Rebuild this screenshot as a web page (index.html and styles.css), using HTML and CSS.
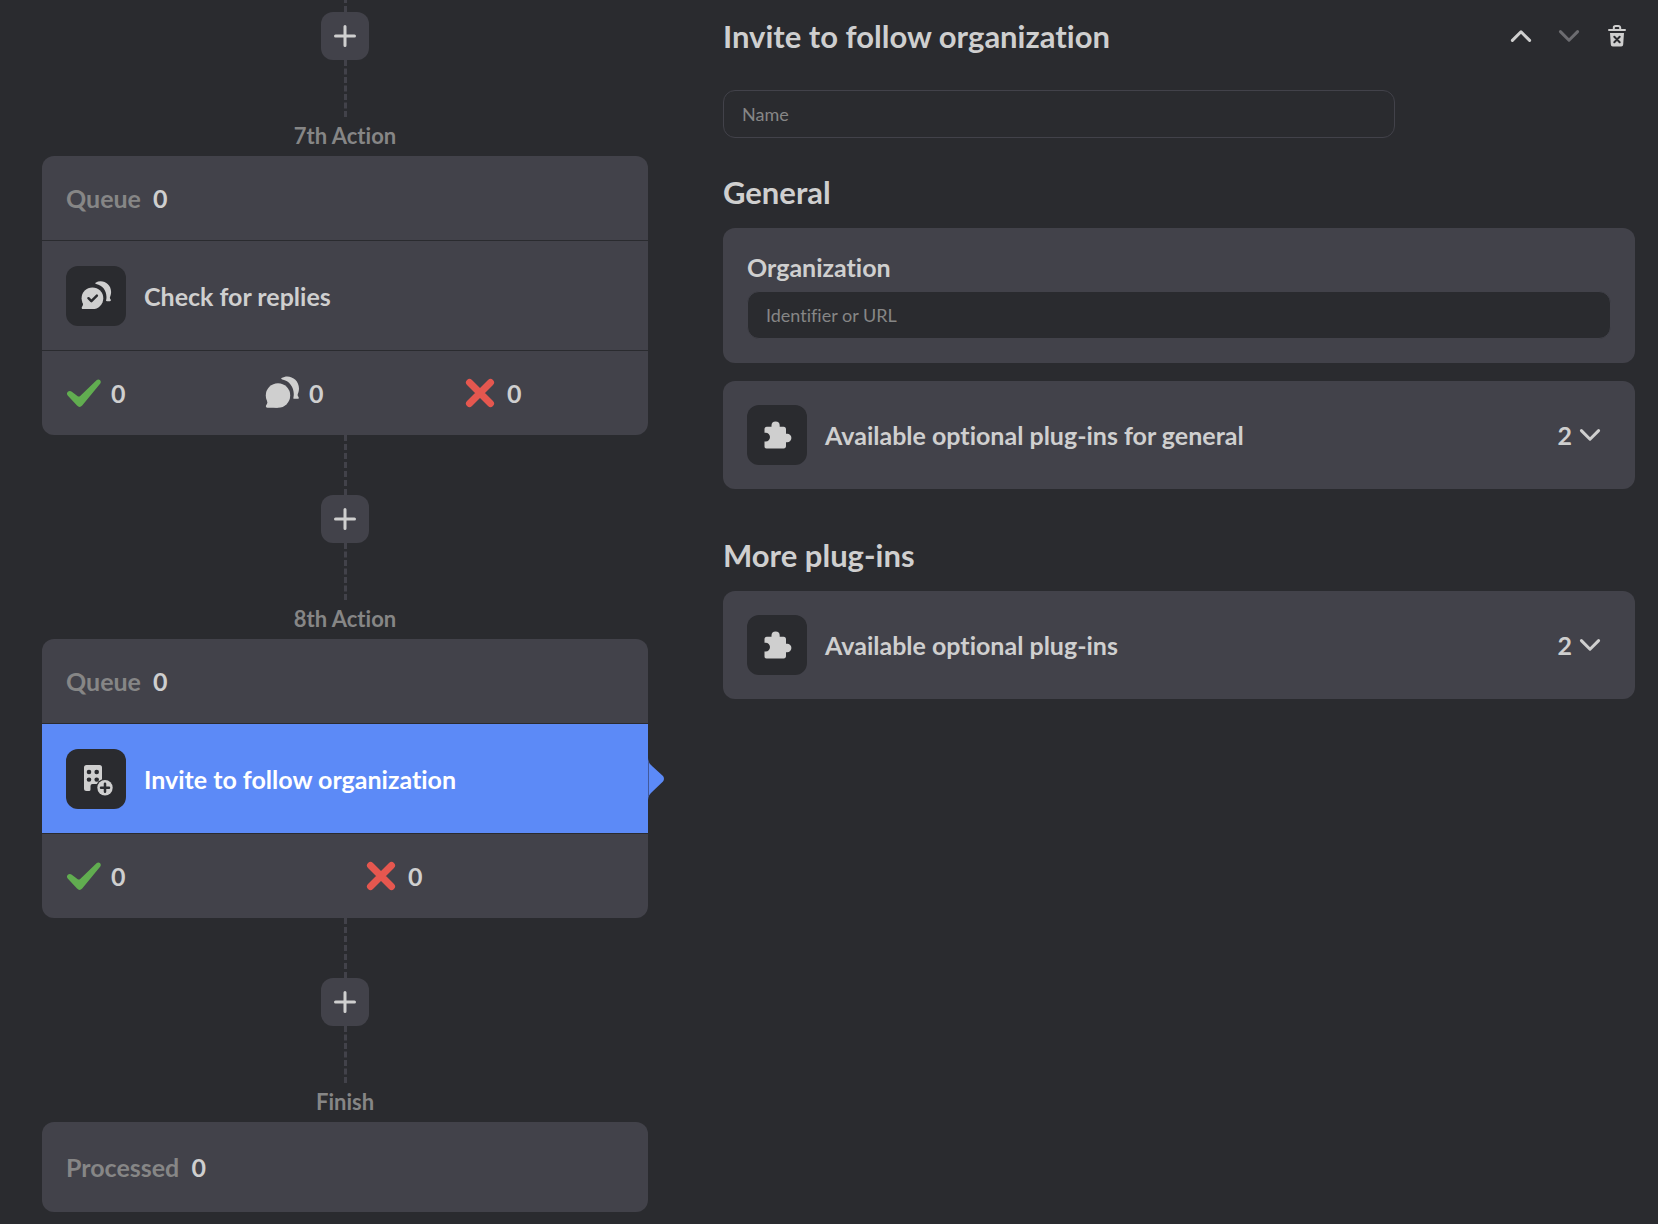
FILE: index.html
```html
<!DOCTYPE html>
<html lang="en">
<head>
    <meta charset="UTF-8">
    <meta name="viewport" content="width=device-width, initial-scale=1.0">
    <title>Campaign workflow</title>
    <link rel="stylesheet" href="styles.css">
</head>
<body>

<!-- shared icons -->
<svg class="sprite" aria-hidden="true">
    <symbol id="plus" viewBox="0 0 24 24">
        <path d="M12 2.500v19M2.500 12h19" fill="none" stroke="currentColor" stroke-width="3" stroke-linecap="round"/>
    </symbol>
    <symbol id="chevron" viewBox="0 0 24 24">
        <path d="M3.400 7.600l8.600 8.600 8.600-8.600" fill="none" stroke="currentColor" stroke-width="3" stroke-linecap="round" stroke-linejoin="round"/>
    </symbol>
    <symbol id="check" viewBox="0 0 36 36">
        <path d="M1.800 16.800c1.200-1.200 2.800-1.200 4 0l5.600 4.200c1 .8 1.800.8 2.800-.1L30.500 5.300c1.100-1 2.600-1 3.600 0 .9 1 .9 2.400 0 3.500L16.200 30.500c-1.700 1.900-3.500 1.900-5.200 0L1.700 20.600c-1-1.200-1-2.700.1-3.800z" fill="#61ad50"/>
    </symbol>
    <symbol id="cross" viewBox="0 0 36 36">
        <path d="M7.500 7.500l21 21M28.500 7.500l-21 21" fill="none" stroke="#e5574f" stroke-width="7" stroke-linecap="round"/>
    </symbol>
    <symbol id="replies" viewBox="0 0 36 36">
        <circle cx="14" cy="20.500" r="12.200" fill="currentColor"/>
        <path d="M3 25.500c.8 1.800.4 3-.7 4.600-.9 1.400-.4 2.600 1.200 2.600H14l-4-6z" fill="currentColor"/>
        <path d="M17.500 3C25-1.500 35 4 35 13.500c0 2.500-.8 4.500-1.300 6-.3 1 .2 1.700.8 2.500.6.9.3 1.800-.8 1.800h-3.300c-1 0-1.400-.7-.9-1.600C31 14 26.500 6 18.200 4.500c-1-.2-1.300-1-.7-1.500z" fill="currentColor"/>
    </symbol>
    <symbol id="puzzle" viewBox="0 0 32 32">
        <path d="M3.500 10.200c0-1.500.8-2.400 2.300-2.400h4.700V6.600a4.100 4.100 0 0 1 8.200 0v1.200h4c1.500 0 2.300.9 2.300 2.400v4.600h1.200a4.200 4.200 0 0 1 0 8.400H25v3.900c0 1.500-.8 2.300-2.300 2.300H5.500c-1.300 0-2-.8-2-2v-5h1.200a4.300 4.300 0 0 0 0-8.600H3.500z" fill="currentColor"/>
    </symbol>
</svg>

<main class="editor">
    <section class="workflow">
        <div class="line"></div>
        <button class="add" type="button" aria-label="Add action"><svg class="icon"><use href="#plus"/></svg></button>
        <div class="line short"></div>
        <h3 class="step">7th Action</h3>
        <article class="action">
            <div class="queue">Queue <span class="count">0</span></div>
            <button class="action-name" type="button">
                <span class="tile">
                    <svg class="tile-icon" viewBox="0 0 36 36">
                        <use href="#replies"/>
                        <path d="M9.500 20.500l3.300 3.300 6.200-6.200" fill="none" stroke="#2a2b2f" stroke-width="2.800" stroke-linecap="round" stroke-linejoin="round"/>
                    </svg>
                </span>
                Check for replies
            </button>
            <div class="stats">
                <div class="stat"><svg class="stat-icon"><use href="#check"/></svg>0</div>
                <div class="stat"><svg class="stat-icon"><use href="#replies"/></svg>0</div>
                <div class="stat"><svg class="stat-icon"><use href="#cross"/></svg>0</div>
            </div>
        </article>

        <div class="line"></div>
        <button class="add" type="button" aria-label="Add action"><svg class="icon"><use href="#plus"/></svg></button>
        <div class="line short"></div>
        <h3 class="step">8th Action</h3>
        <article class="action">
            <div class="queue">Queue <span class="count">0</span></div>
            <button class="action-name selected" type="button">
                <span class="tile">
                    <svg class="tile-icon building" viewBox="0 0 32 32">
                        <path d="M6.500 2H19.500a2.500 2.500 0 0 1 2.500 2.500V21H12.500a2 2 0 0 0-2 2v3.500a1.500 1.500 0 0 1-1.500 1.500H6.500a2.500 2.500 0 0 1-2.500-2.500V4.500A2.500 2.500 0 0 1 6.500 2z" fill="#cfcfcf"/>
                        <path d="M8.900 9h.2M16.600 9h.2M8.900 16.600h.2M16.600 16.600h.2" stroke="#2a2b2f" stroke-width="4.400" stroke-linecap="round"/>
                        <circle cx="25" cy="24.700" r="9" fill="#2a2b2f"/>
                        <circle cx="25" cy="24.700" r="7.700" fill="#cfcfcf"/>
                        <path d="M25 20.700v8M21 24.700h8" stroke="#2a2b2f" stroke-width="2.500" stroke-linecap="round"/>
                    </svg>
                </span>
                Invite to follow organization
                <svg class="pointer" viewBox="0 0 16 42">
                    <path d="M0 0c0 4 2 6 4 8l11 10c1.300 1.500 1.300 4 0 5.500L4 34c-2 2-4 4-4 8z" fill="#5c8af7"/>
                    <path d="M.5 3v36" stroke="#42599a"/>
                </svg>
            </button>
            <div class="stats">
                <div class="stat"><svg class="stat-icon"><use href="#check"/></svg>0</div>
                <div class="stat"><svg class="stat-icon"><use href="#cross"/></svg>0</div>
            </div>
        </article>

        <div class="line"></div>
        <button class="add" type="button" aria-label="Add action"><svg class="icon"><use href="#plus"/></svg></button>
        <div class="line short"></div>
        <h3 class="step">Finish</h3>
        <article class="action">
            <div class="queue processed">Processed <span class="count">0</span></div>
        </article>
    </section>

    <section class="settings">
        <header class="header">
            <h1 class="title">Invite to follow organization</h1>
            <div class="tools">
                <button class="tool" type="button" aria-label="Move up"><svg class="icon up"><use href="#chevron"/></svg></button>
                <button class="tool" type="button" aria-label="Move down" disabled><svg class="icon"><use href="#chevron"/></svg></button>
                <button class="tool" type="button" aria-label="Delete">
                    <svg class="icon" viewBox="0 0 24 24">
                        <path d="M4 6h16M8.800 5.500V3.800a1.800 1.800 0 0 1 1.800-1.800h2.800a1.800 1.800 0 0 1 1.800 1.800v1.700" fill="none" stroke="currentColor" stroke-width="2" stroke-linecap="round"/>
                        <path d="M5 9h14l-.8 11.500a2 2 0 0 1-2 1.900H7.800a2 2 0 0 1-2-1.900z" fill="currentColor"/>
                        <path d="M9.300 12.800l5.400 5.400M14.700 12.800l-5.400 5.400" stroke="#2a2b2f" stroke-width="2" stroke-linecap="round"/>
                    </svg>
                </button>
            </div>
        </header>

        <input class="input name" type="text" placeholder="Name" aria-label="Name">

        <h2 class="title">General</h2>
        <div class="card">
            <label class="label" for="organization">Organization</label>
            <input class="input" id="organization" type="text" placeholder="Identifier or URL">
        </div>
        <button class="card plugins" type="button">
            <span class="tile"><svg class="tile-icon"><use href="#puzzle"/></svg></span>
            <span class="plugins-name">Available optional plug-ins for general</span>
            2
            <svg class="icon"><use href="#chevron"/></svg>
        </button>

        <h2 class="title more">More plug-ins</h2>
        <button class="card plugins" type="button">
            <span class="tile"><svg class="tile-icon"><use href="#puzzle"/></svg></span>
            <span class="plugins-name">Available optional plug-ins</span>
            2
            <svg class="icon"><use href="#chevron"/></svg>
        </button>
    </section>
</main>

</body>
</html>
```

FILE: styles.css
```css
* {
    box-sizing: border-box;
}

body {
    margin: 0;
    background-color: #2a2b2f;
    color: #cfcfcf;
    font-family: 'Lato', sans-serif;
    font-size: 25px;
    font-weight: 700;
    font-variant-ligatures: none;
    line-height: 36px;
}

button,
input {
    font: inherit;
    font-variant-ligatures: none;
    color: inherit;
}

button {
    border: none;
    cursor: pointer;
}

.sprite {
    display: none;
}

.editor {
    display: grid;
    grid-template-columns: 101fr 152fr;
    gap: 75px;
    height: 100vh;
    padding: 0 23px 0 42px;
    overflow: hidden;
}

/* Workflow, scrolled to its end */
.workflow {
    display: flex;
    flex-direction: column;
    align-items: center;
    justify-content: flex-end;
    min-height: 0;
    padding-bottom: 12px;
}

.workflow > * {
    flex-shrink: 0;
}

.line {
    width: 0;
    height: 60px;
    border-left: 3px dashed #42424a;
}

.line.short {
    height: 57px;
}

.add {
    display: flex;
    align-items: center;
    justify-content: center;
    width: 48px;
    height: 48px;
    padding: 0;
    border-radius: 12px;
    background-color: #42424a;
}

.icon {
    display: block;
    width: 24px;
    height: 24px;
}

.step {
    margin: 0;
    padding: 1px 0 2px;
    color: #868686;
    font-size: 22px;
}

.action {
    width: 100%;
    border-radius: 12px;
    background-color: #42424a;
}

.queue {
    padding: 24px;
    color: #868686;
}

.queue.processed {
    padding: 27px 24px;
}

.count {
    margin-left: 6px;
    color: #cfcfcf;
}

.action-name {
    position: relative;
    display: flex;
    align-items: center;
    gap: 18px;
    width: 100%;
    height: 111px;
    padding: 0 24px;
    border: solid #2a2b2f;
    border-width: 1px 0;
    background-color: transparent;
    text-align: left;
}

.action-name.selected {
    background-color: #5c8af7;
    color: #fff;
}

.pointer {
    position: absolute;
    top: 50%;
    left: 100%;
    width: 16px;
    height: 42px;
    margin-top: -21px;
}

.tile {
    display: flex;
    align-items: center;
    justify-content: center;
    width: 60px;
    height: 60px;
    border-radius: 12px;
    background-color: #2a2b2f;
    color: #cfcfcf;
}

.tile-icon {
    width: 32px;
    height: 32px;
}

.building {
    overflow: visible;
}

.stats {
    display: flex;
    gap: 36px;
    padding: 24px;
}

.stat {
    display: flex;
    flex: 1;
    align-items: center;
    gap: 9px;
}

.stat-icon {
    width: 36px;
    height: 36px;
}

/* Settings of the selected action */
.settings {
    min-width: 0;
}

.header {
    display: flex;
    align-items: center;
    justify-content: space-between;
    margin: 12px -6px 30px 0;
}

.title {
    margin: 0;
    font-size: 31px;
    font-weight: 700;
}

h2.title {
    margin: 36px 0 18px;
}

h2.more {
    margin-top: 48px;
}

.tools {
    display: flex;
}

.tool {
    display: flex;
    align-items: center;
    justify-content: center;
    width: 48px;
    height: 48px;
    padding: 0;
    background-color: transparent;
}

.tool:disabled {
    color: #6c6c70;
}

.up {
    transform: rotate(180deg);
}

.input {
    display: block;
    width: 100%;
    height: 48px;
    padding: 0 18px;
    border: 1px solid #42424a;
    border-radius: 12px;
    background-color: #2a2b2f;
    font-size: 18px;
    font-weight: 400;
}

.input.name {
    max-width: 672px;
}

.input::placeholder {
    color: #868686;
}

.card {
    width: 100%;
    margin-bottom: 18px;
    padding: 24px;
    border-radius: 12px;
    background-color: #42424a;
}

.label {
    display: block;
    margin-bottom: 9px;
    line-height: 30px;
}

.plugins {
    display: flex;
    align-items: center;
    gap: 6px;
    padding-right: 33px;
    text-align: left;
}

.plugins-name {
    flex: 1;
    padding-left: 12px;
}
```
